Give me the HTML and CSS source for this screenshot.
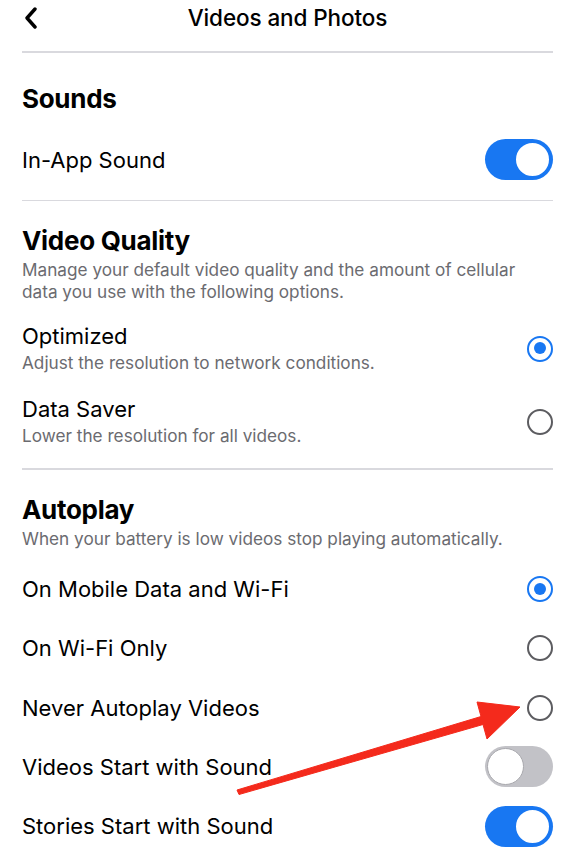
FILE: index.html
```html
<!DOCTYPE html>
<html lang="en">
<head>
    <meta charset="UTF-8">
    <meta name="viewport" content="width=device-width, initial-scale=1.0">
    <title>Videos and Photos</title>
    <link rel="stylesheet" href="styles.css">
</head>
<body>

<div class="page">
    <div class="topbar">
        <svg class="back" width="16" height="22" viewBox="0 0 16 22">
            <path d="M12 2 L4 11 L12 20" fill="none" stroke="#000" stroke-width="3.4" stroke-linecap="round" stroke-linejoin="round"/>
        </svg>
        <div class="title">Videos and Photos</div>
    </div>
    <div class="rule rule-top"></div>

    <h2 class="heading heading-first">Sounds</h2>
    <div class="row row-sound">
        <span>In-App Sound</span>
        <span class="switch on"><span class="knob"></span></span>
    </div>
    <div class="rule rule-mid"></div>

    <h2 class="heading">Video Quality</h2>
    <p class="note">Manage your default video quality and the amount of cellular data you use with the following options.</p>
    <div class="option option-first">
        <div class="option-text">
            <div class="label">Optimized</div>
            <div class="sub">Adjust the resolution to network conditions.</div>
        </div>
        <span class="radio checked"></span>
    </div>
    <div class="option">
        <div class="option-text">
            <div class="label">Data Saver</div>
            <div class="sub">Lower the resolution for all videos.</div>
        </div>
        <span class="radio"></span>
    </div>
    <div class="rule rule-low"></div>

    <h2 class="heading">Autoplay</h2>
    <p class="note">When your battery is low videos stop playing automatically.</p>
    <div class="list">
        <div class="row"><span>On Mobile Data and Wi-Fi</span><span class="radio checked"></span></div>
        <div class="row"><span>On Wi-Fi Only</span><span class="radio"></span></div>
        <div class="row"><span>Never Autoplay Videos</span><span class="radio"></span></div>
        <div class="row"><span>Videos Start with Sound</span><span class="switch"><span class="knob"></span></span></div>
        <div class="row"><span>Stories Start with Sound</span><span class="switch on"><span class="knob"></span></span></div>
    </div>

    <!-- red pointer drawn on top of the list -->
    <svg class="pointer" width="575" height="853" viewBox="0 0 575 853">
        <polygon points="237,790 481,716.5 477,702 520,707 487,739 483,724.5 239,794.5" fill="#f42a1c" stroke="#f42a1c" stroke-width="1" stroke-linejoin="round"/>
    </svg>
</div>

</body>
</html>
```

FILE: styles.css
```css
body { margin: 0; padding: 0; background: #fff; color: #000; font-family: Inter, "Liberation Sans", sans-serif; }
.page { position: relative; width: 575px; height: 853px; overflow: hidden; }
.topbar { display: flex; align-items: center; justify-content: center; height: 35px; position: relative; }
.back { position: absolute; left: 23px; top: 7px; }
.title { font-size: 22.5px; font-weight: 500; letter-spacing: -0.1px; }
.rule { height: 1.5px; background: #d9d9de; margin: 0 22px; }
.rule-top { margin-top: 16px; }
.rule-mid { margin-top: 10px; }
.rule-low { margin-top: 21px; }
.heading { margin: 25px 22px 0; font-size: 26px; font-weight: 700; line-height: 30px; letter-spacing: -0.3px; }
.heading-first { margin-top: 31px; }
.note { margin: 3px 22px 0; width: 505px; font-size: 17.2px; line-height: 22px; color: #6b6b70; }
.row { display: flex; align-items: center; justify-content: space-between; margin: 0 22px; height: 59.25px; font-size: 22px; }
.row-sound { height: 60px; margin-top: 16px; }
.list { margin-top: 10px; }
.option { display: flex; align-items: center; justify-content: space-between; margin: 22px 22px 0; }
.option-first { margin-top: 20px; }
.label { font-size: 22px; line-height: 26px; }
.sub { margin-top: 3px; font-size: 17.2px; line-height: 22px; color: #6b6b70; }
.radio { width: 26px; height: 26px; box-sizing: border-box; border: 2.5px solid #5c5c60; border-radius: 50%; position: relative; flex: none; }
.radio.checked { border-color: #1877f2; }
.radio.checked::after { content: ""; position: absolute; left: 4.5px; top: 4.5px; width: 12px; height: 12px; border-radius: 50%; background: #1877f2; }
.switch { width: 68px; height: 41px; border-radius: 21px; background: #c2c2c7; position: relative; flex: none; }
.switch .knob { position: absolute; top: 2px; left: 2px; width: 37px; height: 37px; box-sizing: border-box; border-radius: 50%; background: #fff; border: 1.5px solid #a8a8ad; }
.switch.on { background: #1877f2; }
.switch.on .knob { left: 29px; border: 2px solid #1877f2; }
.pointer { position: absolute; left: 0; top: 0; pointer-events: none; }
```
